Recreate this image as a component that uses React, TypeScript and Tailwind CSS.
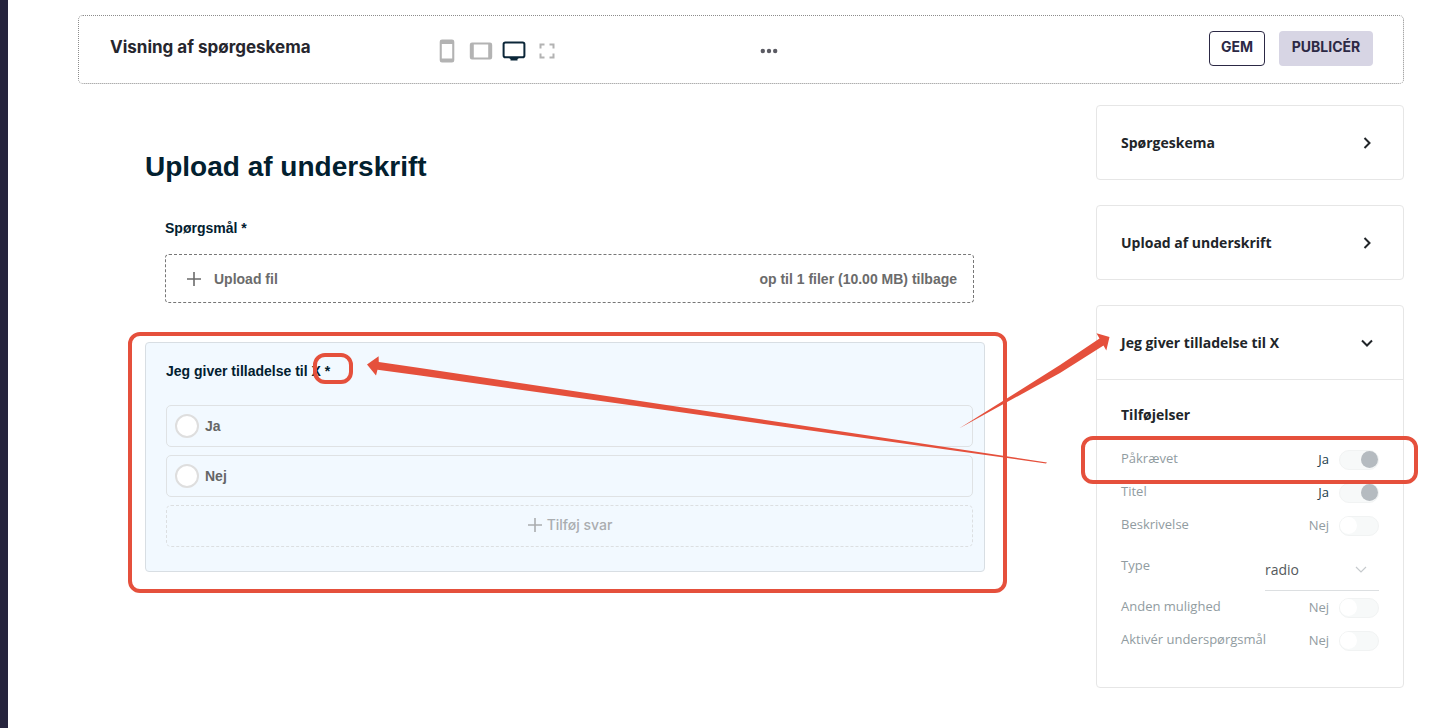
import { useState, type ReactNode } from "react";

const SANS = "font-['Open_Sans','Noto_Sans',sans-serif]";

function Plus({ className }: { className: string }) {
  return (
    <svg viewBox="0 0 16 16" className={className} aria-hidden="true">
      <path d="M8 1v14M1 8h14" stroke="currentColor" strokeWidth="1.6" fill="none" />
    </svg>
  );
}

function Chevron({ open = false }: { open?: boolean }) {
  return (
    <svg viewBox="0 0 16 16" className="size-4 text-[#212529]" aria-hidden="true">
      <path
        d={open ? "M3 5.500l5 5 5-5" : "M5.500 3l5 5-5 5"}
        stroke="currentColor"
        strokeWidth="2"
        fill="none"
      />
    </svg>
  );
}

function DeviceSwitcher() {
  return (
    <nav aria-label="Enhed" className="flex w-[321px] items-center pt-[5px] text-[#b3b3b3]">
      <button type="button" aria-label="Mobil" className="mr-[14px]">
        <svg viewBox="0 0 16 24" className="h-6 w-4">
          <path
            fill="currentColor"
            fillRule="evenodd"
            d="M3 .5h10A2.3 2.3 0 0 1 15.300 2.800v18.400A2.300 2.300 0 0 1 13 23.500H3A2.300 2.300 0 0 1 .7 21.200V2.800A2.300 2.300 0 0 1 3 .5zM2.800 5v14.500h10.400V5z"
          />
        </svg>
      </button>
      <button type="button" aria-label="Tablet" className="mr-[9px]">
        <svg viewBox="0 0 24 18" className="h-[18px] w-6">
          <path
            fill="currentColor"
            fillRule="evenodd"
            d="M3 .5h18A2.200 2.200 0 0 1 23.200 2.700v12.600A2.200 2.200 0 0 1 21 17.500H3A2.200 2.200 0 0 1 .8 15.300V2.700A2.200 2.200 0 0 1 3 .5zM4.800 2.500v13h14.400v-13z"
          />
        </svg>
      </button>
      <button type="button" aria-label="Computer" className="mr-[13px] text-[#0b2638]">
        <svg viewBox="0 0 24 20" className="h-5 w-6">
          <rect x="1.600" y="1.400" width="20.800" height="14.800" rx="1.800" fill="none" stroke="currentColor" strokeWidth="2" />
          <path fill="currentColor" d="M7.500 16.500h9v1l-1 .5v1.500h-7V18l-1-.5z" />
        </svg>
      </button>
      <button type="button" aria-label="Fuld skærm">
        <svg viewBox="0 0 16 16" className="size-4">
          <path
            d="M1.500 5.500v-4h4M10.500 1.500h4v4M14.500 10.500v4h-4M5.500 14.500h-4v-4"
            stroke="currentColor"
            strokeWidth="2"
            fill="none"
          />
        </svg>
      </button>
    </nav>
  );
}

function Toolbar() {
  return (
    <header className="flex items-center rounded-[5px] border border-dotted border-[#8c8c8c] pt-[15px] pr-[30px] pb-[17px] pl-[31px] font-[Inter,sans-serif]">
      <h2 className="w-[329px] pb-1 text-[17px] leading-5 font-bold text-[#26262e]">Visning af spørgeskema</h2>
      <DeviceSwitcher />
      <button type="button" aria-label="Flere muligheder" className="pt-1">
        <svg viewBox="0 0 18 6" className="h-[6px] w-[18px] text-[#5b5b63]">
          <circle cx="2.800" cy="3" r="2.200" fill="currentColor" />
          <circle cx="9" cy="3" r="2.200" fill="currentColor" />
          <circle cx="15.200" cy="3" r="2.200" fill="currentColor" />
        </svg>
      </button>
      <div className="ml-auto flex gap-[14px] text-sm font-bold text-[#2c2945]">
        <button type="button" className="h-[35px] w-14 rounded border border-[#2c2945] pb-[3px]">
          GEM
        </button>
        <button type="button" className="h-[35px] w-[94px] rounded bg-[#d7d5e4] pb-[3px]">
          PUBLICÉR
        </button>
      </div>
    </header>
  );
}

function Option({ label }: { label: string }) {
  return (
    <label className="flex h-[42px] items-center gap-[6px] rounded-[5px] border border-[#dfe2e4] pl-2 text-sm font-bold text-[#666]">
      <input
        type="radio"
        name="tilladelse"
        className="size-6 appearance-none rounded-full border-2 border-[#dedede] bg-white checked:border-[6px]"
      />
      {label}
    </label>
  );
}

function Highlight({ className }: { className: string }) {
  return (
    <span
      aria-hidden="true"
      className={`pointer-events-none absolute z-10 rounded-xl border-4 border-[#e5503c] ${className}`}
    />
  );
}

function FormPreview() {
  return (
    <main className="w-[840px] pt-11 font-['Liberation_Sans',Arial,sans-serif] text-[#02202f]">
      <h1 className="text-[28px] leading-9 font-bold">Upload af underskrift</h1>
      <section className="pt-[33px] pr-[11px] pl-5">
        <h3 className="text-sm leading-5 font-bold">Spørgsmål *</h3>
        <button
          type="button"
          className="mt-4 flex h-[49px] w-full items-center rounded border border-dashed border-[#777] pr-4 pl-5 text-sm font-bold text-[#6b6b6b]"
        >
          <Plus className="mr-3 size-4" />
          Upload fil
          <span className="ml-auto">op til 1 filer (10.00 MB) tilbage</span>
        </button>
      </section>
      <div className="relative mt-[39px]">
        <Highlight className="-top-[10px] -right-[22px] -bottom-[21px] -left-[17px]" />
        <section className="rounded border border-[#d8dee3] bg-[#f2f9ff] pt-[18px] pr-[11px] pb-6 pl-5">
          <h3 className="text-sm leading-5 font-bold">
            Jeg giver tilladelse til X{" "}
            <span className="relative">
              *
              <Highlight className="-top-[10px] -right-[23px] -bottom-[5px] -left-3" />
            </span>
          </h3>
          <div className="mt-6 flex flex-col gap-2">
            <Option label="Ja" />
            <Option label="Nej" />
            <button
              type="button"
              className="flex h-[42px] items-center justify-center gap-1 rounded-[5px] border border-dashed border-[#dcdfe1] pb-[2px] font-[Inter,sans-serif] text-sm font-medium text-[#aaadb0]"
            >
              <Plus className="size-4" />
              Tilføj svar
            </button>
          </div>
        </section>
      </div>
    </main>
  );
}

const CARD = "rounded border border-[#e6e6e6] bg-white";
const CARD_HEAD = "flex w-full items-center justify-between pr-7 pl-6 text-left text-sm font-bold text-[#212529]";

function ToggleRow({
  id,
  label,
  initial = false,
  children,
}: {
  id: string;
  label: string;
  initial?: boolean;
  children?: ReactNode;
}) {
  const [on, setOn] = useState(initial);
  return (
    <div className="relative flex h-[33px] items-center">
      {children}
      <label htmlFor={id} className="pb-px text-[#919ca1]">
        {label}
      </label>
      <span className={on ? "ml-auto text-[#223c4a]" : "ml-auto text-[#919ca1]"}>{on ? "Ja" : "Nej"}</span>
      <input
        id={id}
        type="checkbox"
        role="switch"
        checked={on}
        onChange={(e) => setOn(e.target.checked)}
        className="ml-[10px] flex h-5 w-10 appearance-none items-center rounded-full border border-[#f1f3f3] bg-[#f7f9f9] before:size-[17px] before:rounded-full before:bg-white checked:justify-end checked:before:bg-[#b5bbc0]"
      />
    </div>
  );
}

function SettingsPanel() {
  return (
    <aside className={`ml-auto flex w-[308px] flex-col gap-[25px] ${SANS}`}>
      <button type="button" className={`${CARD} ${CARD_HEAD} h-[75px]`}>
        Spørgeskema
        <Chevron />
      </button>
      <button type="button" className={`${CARD} ${CARD_HEAD} h-[75px]`}>
        Upload af underskrift
        <Chevron />
      </button>
      <section className={CARD}>
        <button type="button" className={`${CARD_HEAD} h-[74px] border-b border-[#e6e6e6]`}>
          Jeg giver tilladelse til X
          <Chevron open />
        </button>
        <div className="px-6 pt-[25px] pb-[30px] text-[13px]">
          <h4 className="mb-[18px] text-sm leading-5 font-bold text-[#212529]">Tilføjelser</h4>
          <ToggleRow id="required" label="Påkrævet" initial>
            <Highlight className="-top-[7px] -right-[39px] -bottom-2 -left-10" />
          </ToggleRow>
          <ToggleRow id="title" label="Titel" initial />
          <ToggleRow id="description" label="Beskrivelse" />
          <div className="flex h-[49px] justify-between">
            <label htmlFor="type" className="pt-[14px] text-[#919ca1]">
              Type
            </label>
            <div className="relative w-[114px] border-b border-[#dcdfe1]">
              <select
                id="type"
                defaultValue="radio"
                className="h-full w-full appearance-none bg-transparent pt-2 text-sm text-[#55595c]"
              >
                <option>radio</option>
                <option>checkbox</option>
              </select>
              <svg
                viewBox="0 0 12 8"
                className="pointer-events-none absolute right-3 bottom-4 h-2 w-3 text-[#c6cacd]"
                aria-hidden="true"
              >
                <path d="M1 1l5 5 5-5" stroke="currentColor" strokeWidth="1.200" fill="none" />
              </svg>
            </div>
          </div>
          <ToggleRow id="other" label="Anden mulighed" />
          <ToggleRow id="sub" label="Aktivér underspørgsmål" />
        </div>
      </section>
    </aside>
  );
}

function Arrows() {
  return (
    <svg
      viewBox="0 0 1433 728"
      className="pointer-events-none absolute top-0 left-0 z-20 h-[728px] w-[1433px] max-w-none"
      aria-hidden="true"
    >
      <g fill="#e5503c">
        <path d="M367 364.500L378.600 356.300L378.800 362L420 368L640 401L1047 462.500L1046 463.500L640 406.500L420 375.500L377.500 369.700L376 375.500z" />
        <path d="M1109.500 337L1096.500 333.300L1099.500 338.500L1060 365L959 428.500L1060 373L1103.500 345.500L1106.300 350.500z" />
      </g>
    </svg>
  );
}

export default function App() {
  return (
    <div className="relative flex min-h-screen overflow-x-hidden bg-white">
      <div className="w-2 shrink-0 bg-[#26243d]" />
      <div className="flex-1 pt-[15px] pr-[29px] pb-10 pl-[70px]">
        <Toolbar />
        <div className="mt-[21px] flex items-start pl-[67px]">
          <FormPreview />
          <SettingsPanel />
        </div>
      </div>
      <Arrows />
    </div>
  );
}
